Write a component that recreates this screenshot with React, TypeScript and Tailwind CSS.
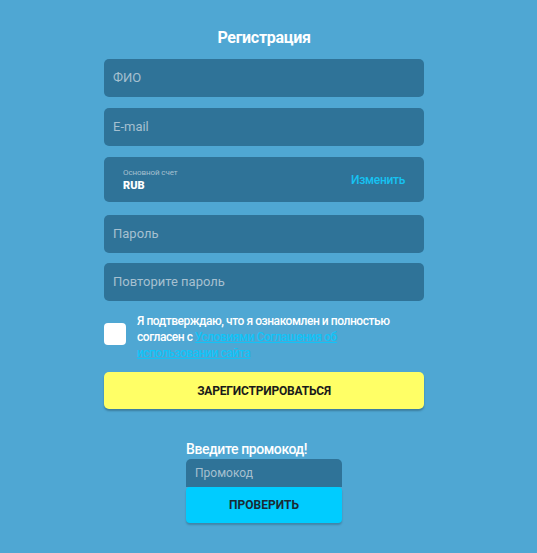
export default function App() {
  const field = "h-[38px] w-full rounded-[5px] bg-[#2f7398] px-[9px] flex items-center text-[13px] text-[#a6c0d0]"
  return (
    <div className="min-h-[553px] w-full bg-[#4fa7d3] font-['Roboto',sans-serif] flex justify-center">
      <div className="w-[320px] ml-[-9px] pt-[28px] flex flex-col">
        <h1 className="text-center text-white font-bold text-[16px] leading-[20px] tracking-[-0.3px]">Регистрация</h1>

        <div className={field + " mt-[11px]"}>ФИО</div>
        <div className={field + " mt-[11px]"}>E-mail</div>

        <div className="mt-[11px] h-[45px] w-full rounded-[5px] bg-[#2f7398] pl-[19px] pr-[19px] flex items-center justify-between">
          <div className="flex flex-col leading-none">
            <span className="text-[8px] text-[#a6c0d0] tracking-[-0.1px]">Основной счет</span>
            <span className="text-[11px] font-black text-white mt-[3px]">RUB</span>
          </div>
          <span className="text-[12px] font-medium text-[#16c2f2] tracking-[-0.3px]">Изменить</span>
        </div>

        <div className={field + " mt-[13px]"}>Пароль</div>
        <div className={field + " mt-[10px]"}>Повторите пароль</div>

        <div className="mt-[12px] flex items-start pr-[22px]">
          <div className="mt-[10px] w-[22px] h-[22px] shrink-0 rounded-[4px] bg-white"></div>
          <p className="ml-[11px] text-[12px] leading-[16px] font-medium text-white tracking-[-0.45px]">
            Я подтверждаю, что я ознакомлен и полностью согласен с{" "}
            <a className="text-[#12c3f7] underline">Условиями Соглашения об использовании сайта</a>
          </p>
        </div>

        <button className="mt-[11px] h-[37px] w-full rounded-[5px] bg-[#ffff66] shadow-[0_2px_2px_rgba(0,0,0,0.25)] text-[12px] font-bold text-[#1a1a1a] tracking-[-0.2px]">
          ЗАРЕГИСТРИРОВАТЬСЯ
        </button>

        <div className="mt-[31px] self-center w-[156px] flex flex-col">
          <span className="text-[14px] font-medium text-white leading-[18px] tracking-[-0.4px]">Введите промокод!</span>
          <div className="mt-[1px] h-[28px] rounded-t-[5px] bg-[#2f7398] px-[9px] flex items-center text-[12px] text-[#a6c0d0]">Промокод</div>
          <button className="h-[36px] rounded-[4px] bg-[#00ccff] shadow-[0_2px_2px_rgba(0,0,0,0.2)] text-[12px] font-bold text-[#1a2a35]">
            ПРОВЕРИТЬ
          </button>
        </div>
      </div>
    </div>
  )
}
